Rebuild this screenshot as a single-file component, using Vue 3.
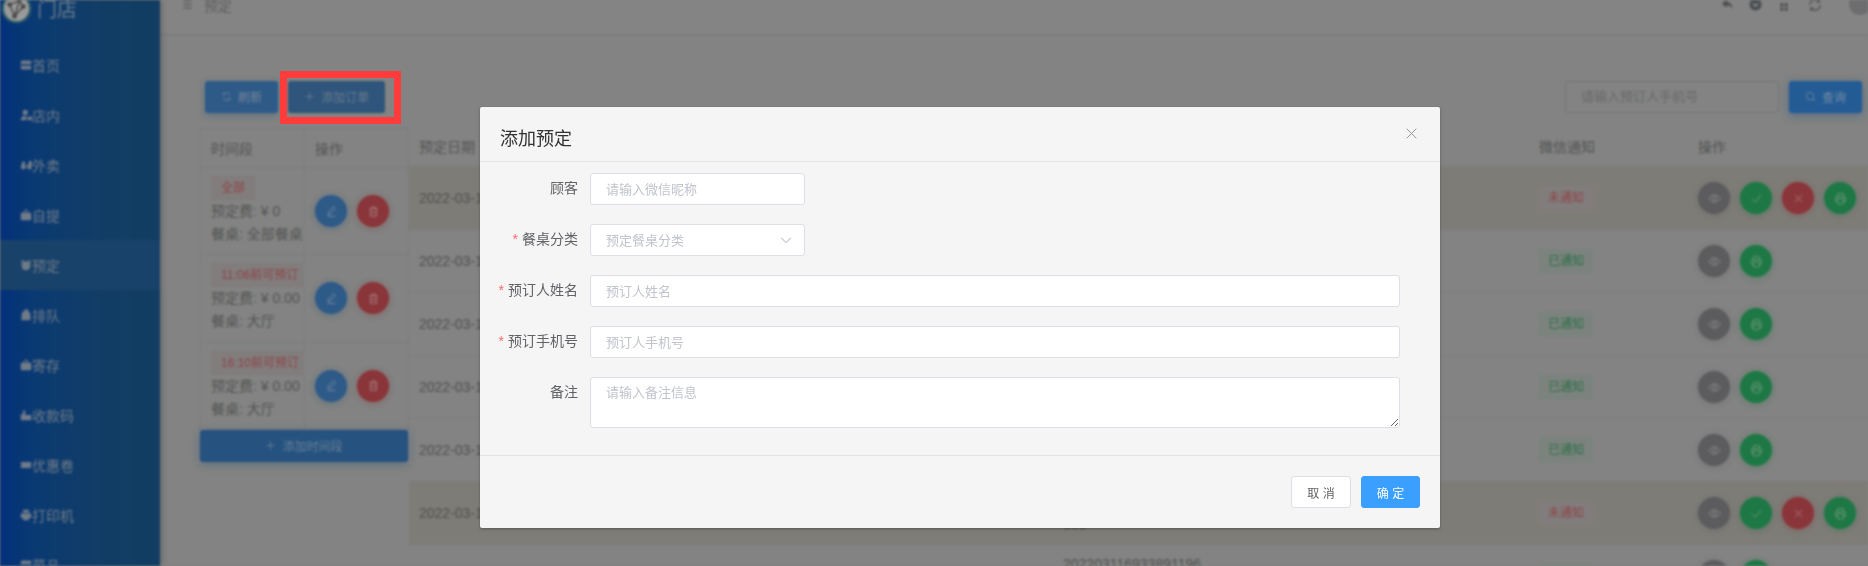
<script setup>
const icons = {
  eye: 'M1 8s2.600-4.500 7-4.500S15 8 15 8s-2.600 4.500-7 4.500S1 8 1 8z M8 5.600a2.400 2.400 0 1 0 0 4.800 2.400 2.400 0 0 0 0-4.800z',
  check: 'M2.500 8.500L6.500 12.500 13.500 4',
  close: 'M3.500 3.500L12.500 12.500 M12.500 3.500L3.500 12.500',
  print: 'M4.500 6V2h7v4 M4.500 11.500H2V6h12v5.500h-2.500 M4.500 8.500h7V14.500h-7z',
  edit: 'M10.500 2l2.500 2.500-6.500 6.500-3 .8.700-3z M3 14h10',
  trash: 'M3 4.500h10 M6 4.500V2.500h4v2 M4.200 4.500v9.500h7.600V4.500 M6.500 7v4.500 M9.500 7v4.500',
  refresh: 'M13 6A5.500 5.500 0 0 0 3.200 5 M3 2.500V5.300h2.800 M3 10a5.500 5.500 0 0 0 9.800 1 M13 13.500v-2.800h-2.800',
  plus: 'M8 2v12 M2 8h12',
  search: 'M7.500 2a5.500 5.500 0 1 0 0 11 5.500 5.500 0 0 0 0-11z M11.500 11.500L14.500 14.500',
  menu: 'M2 3h12 M2 8h12 M2 13h12',
  arrow: 'M2.500 5.500L8 11l5.500-5.500'
}
const solid = {
  home: 'M3 2h10a2 2 0 0 1 2 2v3H1V4a2 2 0 0 1 2-2z M1 9h14v3a2 2 0 0 1-2 2H3a2 2 0 0 1-2-2z',
  user: 'M7 1a3.500 3.500 0 1 1 0 7 3.500 3.500 0 0 1 0-7z M1 15c0-4 2.500-6 6-6l2 2-1 4z M10 10h6v5h-6z',
  ride: 'M3.500 3a3.500 3.500 0 0 1 3 5.500A3.200 3.200 0 1 1 1 11c0-1 .3-1.800.8-2.500z M12 3a3 3 0 0 1 3 5.500 3.200 3.200 0 1 1-5.500 2.500z M6.500 9h3v2h-3z',
  bag: 'M5 5V3.500a3 3 0 0 1 6 0V5h3a1 1 0 0 1 1 1v8a1 1 0 0 1-1 1H2a1 1 0 0 1-1-1V6a1 1 0 0 1 1-1z M6.500 5h3V3.500a1.500 1.500 0 0 0-3 0z',
  alarm: 'M8 3a6 6 0 1 1 0 12A6 6 0 0 1 8 3z M1 4l3-3 1.500 1.500-3 3z M15 4l-3-3-1.500 1.500 3 3z',
  queue: 'M2 8a6 6 0 0 1 12 0v7H2z M6 0.500h5v3H6z',
  hand: 'M4 2h3v6h8v7H1V7h3z',
  ticket: 'M1 4h14v3a1 1 0 0 0 0 2v3H1V9a1 1 0 0 0 0-2z',
  printer: 'M4 1h8v4H4z M1 6h14v6h-3v3H4v-3H1z'
}
const menu = [
  { label: '首页', icon: 'home' },
  { label: '店内', icon: 'user' },
  { label: '外卖', icon: 'ride' },
  { label: '自提', icon: 'bag' },
  { label: '预定', icon: 'alarm', active: true },
  { label: '排队', icon: 'queue' },
  { label: '寄存', icon: 'bag' },
  { label: '收款码', icon: 'hand' },
  { label: '优惠卷', icon: 'ticket' },
  { label: '打印机', icon: 'printer' },
  { label: '菜品', icon: 'home' }
]
const slots = [
  { tag: '全部', fee: '¥ 0', table: '全部餐桌' },
  { tag: '11:06前可预订', fee: '¥ 0.00', table: '大厅' },
  { tag: '16:10前可预订', fee: '¥ 0.00', table: '大厅' }
]
const orders = [
  { pending: true, no: '' },
  { pending: false, no: '' },
  { pending: false, no: '' },
  { pending: false, no: '' },
  { pending: false, no: '' },
  { pending: true, no: '', no2: '101' },
  { pending: false, no: '202203116933891196', no2: '101' }
]
const fields = [
  { label: '预订人姓名', ph: '预订人姓名' },
  { label: '预订手机号', ph: '预订人手机号' }
]
</script>

<template>
  <div class="stage">
    <div class="app">
      <aside class="sidebar">
        <div class="brand">
          <svg class="logo" viewBox="0 0 32 32">
            <circle cx="16" cy="16" r="15.500" fill="#2a5c68" />
            <circle cx="16" cy="16" r="13" fill="#9a9a9a" />
            <path d="M9 12L19 8 23 14 14 24 9 12M19 8L14 24" fill="none" stroke="#4a4a4a" stroke-width="1.500" />
            <circle cx="9" cy="12" r="2.500" fill="#4a4a4a" />
            <circle cx="19" cy="8" r="2" fill="#4a4a4a" />
            <circle cx="23" cy="14" r="2.500" fill="#4a4a4a" />
            <circle cx="14" cy="24" r="2.500" fill="#4a4a4a" />
          </svg>
          <span class="brand-name">门店</span>
        </div>
        <nav>
          <div v-for="item in menu" :key="item.label" class="menu-item" :class="{ active: item.active }">
            <svg class="menu-icon" viewBox="0 0 16 16"><path :d="solid[item.icon]" /></svg>
            <span>{{ item.label }}</span>
          </div>
        </nav>
      </aside>

      <main class="main">
        <header class="topbar">
          <svg class="line-icon crumb-icon" viewBox="0 0 16 16"><path :d="icons.menu" /></svg>
          <span class="crumb">预定</span>
          <div class="top-actions">
            <svg class="top-icon" viewBox="0 0 16 16"><path d="M7 2L1 7l6 5V9c3 0 5 1 7 4 0-5-3-8-7-8.500z" fill="#4f4f4f" /></svg>
            <svg class="top-icon" viewBox="0 0 16 16"><circle cx="8" cy="8" r="7.500" fill="#4c4f52" /><path d="M5 7l3 3 3-3" fill="none" stroke="#999" stroke-width="1.500" /></svg>
            <svg class="top-icon grid-icon" viewBox="0 0 16 16"><path d="M2 2h5v5H2z M9 2h5v5H9z M2 9h5v5H2z M9 9h5v5H9z" fill="#4f4f4f" /></svg>
            <svg class="top-icon sync-icon" viewBox="0 0 16 16"><path d="M2 8a6 6 0 0 1 10.500-4 M14 8a6 6 0 0 1-10.500 4 M12.800 1.500v3h-3 M3.200 14.500v-3h3" fill="none" stroke="#4f4f4f" stroke-width="1.500" /></svg>
            <span class="avatar"></span>
          </div>
        </header>

        <div class="toolbar">
          <div class="toolbar-left">
            <button class="btn btn-refresh" type="button">
              <svg class="btn-icon" viewBox="0 0 16 16"><path :d="icons.refresh" /></svg>刷新
            </button>
            <button class="btn btn-add" type="button">
              <svg class="btn-icon" viewBox="0 0 16 16"><path :d="icons.plus" /></svg>添加订单
            </button>
          </div>
          <div class="toolbar-right">
            <input class="search" placeholder="请输入预订人手机号" />
            <button class="btn btn-search" type="button">
              <svg class="btn-icon" viewBox="0 0 16 16"><path :d="icons.search" /></svg>查询
            </button>
          </div>
        </div>

        <div class="tables">
          <section class="slots">
            <div class="slot-head">
              <div class="slot-col">时间段</div>
              <div class="slot-col">操作</div>
            </div>
            <div v-for="slot in slots" :key="slot.tag" class="slot-row">
              <div class="slot-col slot-info">
                <div class="slot-clip">
                  <span class="tag tag-red">{{ slot.tag }}</span>
                  <div class="slot-line">预定费: {{ slot.fee }}</div>
                  <div class="slot-line">餐桌: {{ slot.table }}</div>
                </div>
              </div>
              <div class="slot-col slot-ops">
                <span class="round blue"><svg viewBox="0 0 16 16"><path :d="icons.edit" /></svg></span>
                <span class="round red"><svg viewBox="0 0 16 16"><path :d="icons.trash" /></svg></span>
              </div>
            </div>
            <button class="btn btn-slot" type="button">
              <svg class="btn-icon" viewBox="0 0 16 16"><path :d="icons.plus" /></svg>添加时间段
            </button>
          </section>

          <section class="orders">
            <div class="order-head">
              <div>预定日期</div>
              <div></div>
              <div>微信通知</div>
              <div>操作</div>
            </div>
            <div v-for="(order, i) in orders" :key="i" class="order-row" :class="{ pending: order.pending }">
              <div>2022-03-11</div>
              <div class="order-no">{{ order.no }}<br v-if="order.no2" />{{ order.no2 }}</div>
              <div>
                <span class="tag notice" :class="order.pending ? 'tag-red' : 'tag-green'">{{ order.pending ? '未通知' : '已通知' }}</span>
              </div>
              <div class="order-ops">
                <span class="round grey"><svg viewBox="0 0 16 16"><path :d="icons.eye" /></svg></span>
                <span v-if="order.pending" class="round green"><svg viewBox="0 0 16 16"><path :d="icons.check" /></svg></span>
                <span v-if="order.pending" class="round red"><svg viewBox="0 0 16 16"><path :d="icons.close" /></svg></span>
                <span class="round green"><svg viewBox="0 0 16 16"><path :d="icons.print" /></svg></span>
              </div>
            </div>
          </section>
        </div>
      </main>
    </div>

    <div class="overlay">
      <div class="dialog">
        <div class="dialog-head">
          <span class="dialog-title">添加预定</span>
          <svg class="dialog-close" viewBox="0 0 16 16"><path d="M1 1L15 15 M15 1L1 15" /></svg>
        </div>
        <form class="dialog-body">
          <div class="field">
            <label class="field-label">顾客</label>
            <input class="control short" placeholder="请输入微信昵称" />
          </div>
          <div class="field">
            <label class="field-label"><i>*</i>餐桌分类</label>
            <div class="select-wrap">
              <input class="control short" placeholder="预定餐桌分类" readonly />
              <svg class="select-arrow" viewBox="0 0 16 16"><path :d="icons.arrow" /></svg>
            </div>
          </div>
          <div v-for="f in fields" :key="f.label" class="field">
            <label class="field-label"><i>*</i>{{ f.label }}</label>
            <input class="control wide" :placeholder="f.ph" />
          </div>
          <div class="field">
            <label class="field-label">备注</label>
            <textarea class="control wide area" placeholder="请输入备注信息"></textarea>
          </div>
        </form>
        <div class="dialog-foot">
          <button class="foot-btn cancel" type="button">取 消</button>
          <button class="foot-btn ok" type="button">确 定</button>
        </div>
      </div>
    </div>

    <div class="highlight"></div>
  </div>
</template>

<style>
html, body { margin: 0; background: #808080; }
</style>

<style scoped>
* { box-sizing: border-box; }
.stage {
  position: relative;
  width: 1868px;
  height: 566px;
  overflow: hidden;
  background: #808080;
  font-family: "Liberation Sans", "Noto Sans CJK SC", sans-serif;
  font-size: 14px;
}
.app {
  display: flex;
  width: 1868px;
  height: 566px;
  overflow: hidden;
  filter: blur(0.8px);
  color: #555;
}
.sidebar {
  flex: 0 0 160px;
  height: 566px;
  overflow: hidden;
  background: linear-gradient(90deg, #03307a 0, #0a3a72 22%, #113d66 60%, #133d62 100%);
  box-shadow: 2px 0 6px rgba(0, 0, 0, .2);
  z-index: 1;
  color: #6f7b88;
}
.brand {
  display: flex;
  align-items: center;
  height: 40px;
  padding: 0 0 24px 1px;
}
.logo { width: 31px; height: 31px; flex: none; }
.brand-name { margin-left: 5px; font-size: 20px; color: #6a7b8c; }
.menu-item {
  display: flex;
  align-items: center;
  height: 50px;
  padding-left: 20px;
}
.menu-item.active { background: #18426a; }
.menu-icon { width: 12px; height: 12px; fill: #6f7b88; flex: none; }

.main { flex: 1; min-width: 0; background: #828382; }
.topbar {
  display: flex;
  align-items: center;
  height: 35px;
  padding: 0 0 25px 22px;
  background: #848484;
  border-bottom: 1px solid #7a7c7a;
  box-shadow: 0 1px 2px rgba(0, 0, 0, .04);
}
.line-icon { fill: none; stroke: #4f4f4f; stroke-width: 1.500; }
.crumb-icon { width: 11px; height: 11px; }
.crumb { margin-left: 11px; color: #5f5f5f; }
.top-actions { display: flex; align-items: center; margin-left: auto; }
.top-icon { width: 13px; height: 13px; margin-right: 15px; }
.grid-icon { width: 10px; height: 10px; margin-top: 4px; margin-right: 19px; margin-left: 2px; }
.sync-icon { width: 14px; height: 14px; margin-right: 27px; }
.avatar {
  width: 22px;
  height: 22px;
  margin-right: -3px;
  margin-top: -2px;
  border-radius: 50%;
  background: #6d6d70;
  flex: none;
}
.toolbar {
  display: flex;
  justify-content: space-between;
  align-items: center;
  height: 33px;
  margin-top: 45px;
  padding: 0 6px 0 45px;
}
.toolbar-left, .toolbar-right { display: flex; align-items: center; gap: 10px; }
.btn {
  display: inline-flex;
  align-items: center;
  justify-content: center;
  gap: 6px;
  height: 32px;
  padding: 0;
  border: 0;
  border-radius: 3px;
  font: inherit;
  font-size: 12px;
  color: #728498;
}
.btn-icon { width: 11px; height: 11px; fill: none; stroke: currentColor; stroke-width: 1.300; }
.btn-refresh {
  width: 73px;
  background: #2e5a88;
  box-shadow: 0 2px 7px rgba(30, 80, 130, .4);
}
.btn-add {
  width: 97px;
  background: #2f557c;
  color: #67798c;
}
.search {
  width: 214px;
  height: 32px;
  padding: 0 15px;
  border: 1px solid #73767a;
  border-radius: 3px;
  background: transparent;
  font: inherit;
  font-size: 13px;
  outline: none;
}
.search::placeholder { color: #6a6a6a; }
.btn-search {
  width: 73px;
  background: #235b94;
  color: #728aa2;
  box-shadow: 0 2px 9px rgba(25, 80, 145, .5);
}
.tables { display: flex; margin: 15px 0 0 40px; }
.slots { flex: 0 0 208px; }
.slot-head, .slot-row { display: flex; border-left: 1px solid #7a7c7a; }
.slot-head {
  height: 40px;
  border-top: 1px solid #7a7c7a;
  border-bottom: 1px solid #7a7c7a;
}
.slot-row { height: 87.330px; border-bottom: 1px solid #7a7c7a; }
.slot-col {
  flex: 0 0 104px;
  display: flex;
  align-items: center;
  padding-left: 10px;
  border-right: 1px solid #7a7c7a;
  color: #555;
}
.slot-info { display: block; padding-top: 8px; }
.slot-clip { width: 92px; overflow: hidden; white-space: nowrap; }
.slot-line { line-height: 23px; }
.slot-ops { gap: 10px; }
.tag {
  display: inline-block;
  height: 24px;
  padding: 0 9px;
  line-height: 22px;
  border: 1px solid;
  border-radius: 2px;
  font-size: 12px;
  vertical-align: top;
}
.tag-red { color: #8e4548; background: #817d7d; border-color: #857a7a; }
.tag-green { color: #2c7049; background: #7c837e; border-color: #77857c; }
.round {
  display: inline-flex;
  align-items: center;
  justify-content: center;
  width: 32px;
  height: 32px;
  border-radius: 50%;
  flex: none;
}
.round svg { width: 13px; height: 13px; fill: none; stroke-width: 1.200; }
.blue { background: #2e5a88; box-shadow: 0 1px 6px rgba(30, 80, 130, .4); }
.blue svg { stroke: #7489a0; }
.red { background: #8a3539; box-shadow: 0 1px 6px rgba(140, 50, 50, .4); }
.red svg { stroke: #a87a7c; }
.green { background: #1e7845; box-shadow: 0 1px 6px rgba(30, 115, 65, .4); }
.green svg { stroke: #689678; }
.grey { background: #5c5c5f; box-shadow: 0 1px 6px rgba(80, 80, 80, .3); }
.grey svg { stroke: #8a8a8a; }
.btn-slot {
  width: 208px;
  background: #25527f;
  color: #667e96;
  box-shadow: 0 2px 9px rgba(25, 75, 130, .4);
}
.orders { flex: 0 0 1460px; }
.order-head, .order-row {
  display: grid;
  grid-template-columns: 644px 476px 159px 181px;
  align-items: center;
  border-bottom: 1px solid #7b7d7b;
}
.order-head { height: 39px; padding-bottom: 2px; color: #555; }
.order-row { height: 63px; color: #525252; }
.order-head > div, .order-row > div { padding-left: 10px; }
.order-row.pending { background: #7e7c77; }
.order-no { line-height: 23px; }
.notice { padding: 0; width: 54px; text-align: center; }
.order-ops { display: flex; gap: 10px; }

.overlay { position: absolute; inset: 0; }
.dialog {
  display: flex;
  flex-direction: column;
  width: 960px;
  height: 421px;
  margin: 107px 0 0 480px;
  background: #f5f5f5;
  border-radius: 2px;
  box-shadow: 0 1px 3px rgba(0, 0, 0, .3);
}
.dialog-head {
  display: flex;
  justify-content: space-between;
  align-items: center;
  flex: 0 0 55px;
  padding: 6px 23px 0 20px;
  border-bottom: 1px solid #e3e3e3;
}
.dialog-title { font-size: 18px; color: #303133; }
.dialog-close {
  width: 11px;
  height: 11px;
  margin-top: -7px;
  fill: none;
  stroke: #909399;
  stroke-width: 1.400;
}
.dialog-body { flex: 0 0 293px; padding-top: 11px; }
.field { display: flex; align-items: flex-start; margin-bottom: 19px; }
.field-label {
  flex: 0 0 98px;
  height: 32px;
  margin-right: 12px;
  line-height: 30px;
  text-align: right;
  color: #606266;
}
.field-label i { margin-right: 4px; font-style: normal; color: #f56c6c; }
.control {
  display: block;
  height: 32px;
  padding: 0 15px;
  border: 1px solid #dcdfe6;
  border-radius: 3px;
  background: #fff;
  font: inherit;
  font-size: 13px;
  color: #606266;
  outline: none;
}
.control::placeholder { color: #c0c4cc; }
.short { width: 215px; }
.wide { width: 810px; }
.area { height: 51px; padding: 5px 15px; line-height: 20px; resize: vertical; }
.select-wrap { position: relative; }
.select-arrow {
  position: absolute;
  right: 12px;
  top: 9px;
  width: 14px;
  height: 14px;
  fill: none;
  stroke: #c0c4cc;
  stroke-width: 1.200;
}
.dialog-foot {
  display: flex;
  justify-content: flex-end;
  gap: 10px;
  flex: 1;
  padding: 20px 20px 0 0;
  border-top: 1px solid #e3e3e3;
}
.foot-btn {
  width: 60px;
  height: 32px;
  padding: 0;
  border-radius: 3px;
  font: inherit;
  font-size: 12px;
}
.cancel { width: 60px; background: #fff; border: 1px solid #dcdfe6; color: #606266; }
.ok { width: 59px; background: #3a9fff; border: 1px solid #3a9fff; color: #fff; }
.highlight {
  position: absolute;
  left: 280px;
  top: 71px;
  width: 121px;
  height: 53px;
  border: 7px solid #ff3b3b;
  pointer-events: none;
}
</style>
